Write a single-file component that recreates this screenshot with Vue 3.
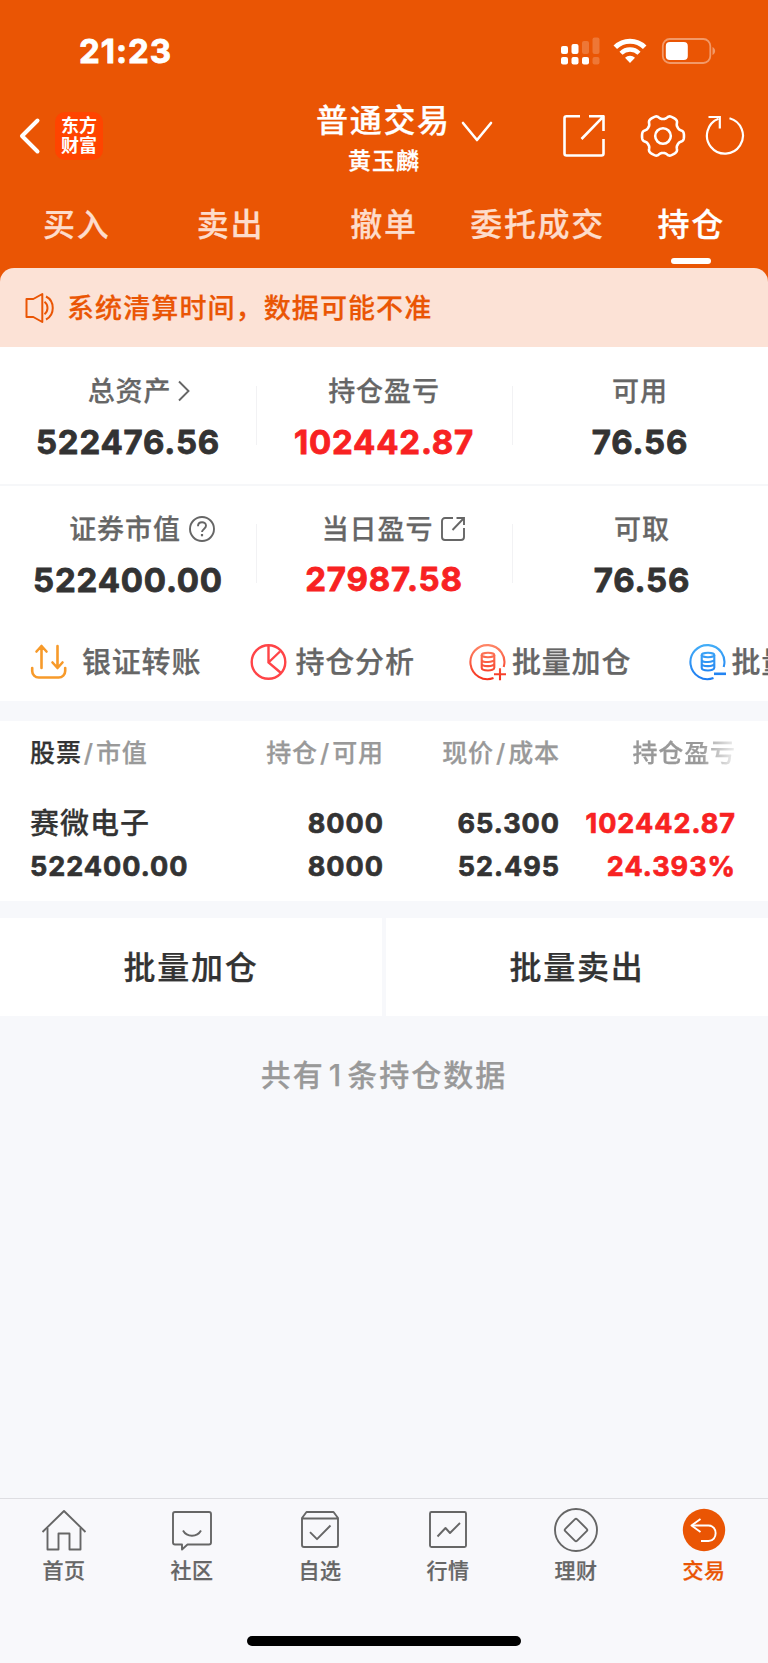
<template>
  <div class="page">
    <header class="header">
      <div class="status">
        <span class="time">21:23</span>
        <div class="status-icons">
          <svg class="signal" width="40" height="28" viewBox="0 0 40 28" fill="#fff">
            <rect x="1" y="9" width="7" height="8" rx="2" />
            <rect x="11.5" y="7" width="7" height="10" rx="2" />
            <rect x="22" y="4" width="7" height="13" rx="2" opacity=".2" />
            <rect x="32.5" y="0.5" width="7" height="16.5" rx="2" opacity=".2" />
            <rect x="1" y="20" width="7" height="7.5" rx="2" />
            <rect x="11.5" y="20" width="7" height="7.5" rx="2" />
            <rect x="22" y="20" width="7" height="7.5" rx="2" />
            <rect x="32.5" y="20" width="7" height="7.5" rx="2" opacity=".2" />
          </svg>
          <svg class="wifi" width="34" height="26" viewBox="0 0 34 26" fill="none" stroke="#fff" stroke-width="5">
            <path d="M2.3 9.3a20.8 20.8 0 0 1 29.4 0" />
            <path d="M8 15.2a12.8 12.8 0 0 1 18 0" stroke-width="4.4" />
            <path d="M17 25l-5-5.2a7.2 7.2 0 0 1 10 0z" fill="#fff" stroke="none" />
          </svg>
          <svg class="battery" width="56" height="28" viewBox="0 0 56 28" fill="none">
            <rect x="1.8" y="2" width="47.5" height="24" rx="7" stroke="#fff" stroke-opacity=".4" stroke-width="1.8" />
            <rect x="4.8" y="5" width="22" height="18" rx="4" fill="#fff" />
            <path d="M51.5 10c3.5 1.5 3.5 6.5 0 8z" fill="#fff" fill-opacity=".4" />
          </svg>
        </div>
      </div>

      <div class="nav">
        <div class="nav-left">
          <svg width="22" height="38" viewBox="0 0 22 38" fill="none" stroke="#fff" stroke-width="4" stroke-linecap="round" stroke-linejoin="round">
            <path d="M18.5 3.5L3 19l15.5 15.5" />
          </svg>
          <div class="logo"><span>东方</span><span>财富</span></div>
        </div>
        <div class="nav-title">
          <div class="title">普通交易</div>
          <div class="user">黄玉麟</div>
        </div>
        <svg class="arrow" width="32" height="22" viewBox="0 0 32 22" fill="none" stroke="#fff" stroke-width="2.6" stroke-linecap="round" stroke-linejoin="round">
          <path d="M2 2l14 17L30 2" />
        </svg>
        <div class="nav-right">
          <svg width="44" height="44" viewBox="0 0 44 44" fill="none" stroke="#fff" stroke-width="2.6" stroke-linejoin="round">
            <path d="M18 2.3H4.5a2 2 0 0 0-2 2V39.5a2 2 0 0 0 2 2h35a2 2 0 0 0 2-2V25M27 2.3h14.5V17M41.5 2.3L19.5 25" />
          </svg>
          <svg class="gear" width="46" height="46" viewBox="-23 -23 46 46" fill="none" stroke="#fff" stroke-width="2.6" stroke-linejoin="round">
            <path :d="gear" />
            <circle r="7.8" />
          </svg>
          <svg class="refresh" width="42" height="44" viewBox="0 0 42 44" fill="none" stroke="#fff" stroke-width="2.2">
            <path d="M25.5 4.2A18 18 0 1 1 14.5 4.8" />
            <path d="M4.5 3H15.8V14.5" />
          </svg>
        </div>
      </div>

      <nav class="tabs">
        <div v-for="tab in tabs" :key="tab" class="tab" :class="{ active: tab === activeTab }">{{ tab }}</div>
      </nav>
    </header>

    <div class="notice-wrap">
      <div class="notice">
        <svg width="30" height="32" viewBox="0 0 30 32" fill="none" stroke="#ea5504" stroke-width="2" stroke-linejoin="round">
          <path d="M1.5 7h6.8l9-5v28l-9-5H1.5z" />
          <path d="M19.5 9.8c4 3 4 9.4 0 12.4" />
          <path d="M21 4.5c9 4.5 9 18.5 0 23" />
        </svg>
        <span>系统清算时间，数据可能不准</span>
      </div>
    </div>

    <section class="assets">
      <div v-for="(row, i) in assets" :key="i" class="asset-row">
        <div v-for="item in row" :key="item.label" class="asset">
          <div class="asset-label" :class="item.icon">
            <span>{{ item.label }}</span>
            <svg v-if="item.icon === 'right'" class="ic-right" width="14" height="22" viewBox="0 0 14 22" fill="none" stroke="#666" stroke-width="1.9">
              <path d="M2 1.5l9.5 9.5L2 20.5" />
            </svg>
            <svg v-if="item.icon === 'help'" class="ic-help" width="26" height="26" viewBox="0 0 26 26" fill="none" stroke="#666" stroke-width="1.9">
              <circle cx="13" cy="13" r="12" />
              <path d="M9 10.2c0-5.2 8-5.2 8-.4 0 3-4 3.2-4 6.2" />
              <path d="M13 18v2.3" stroke-width="2.2" />
            </svg>
            <svg v-if="item.icon === 'share'" class="ic-share" width="26" height="26" viewBox="0 0 26 26" fill="none" stroke="#666" stroke-width="1.9">
              <path d="M13 2H5a3 3 0 0 0-3 3v16a3 3 0 0 0 3 3h16a3 3 0 0 0 3-3v-9M16.5 2H24v7M24 2L12.5 14" />
            </svg>
          </div>
          <div class="asset-value" :class="{ red: item.red }">{{ item.value }}</div>
        </div>
      </div>
    </section>

    <section class="tools">
      <div class="tool first">
        <svg width="38" height="38" viewBox="0 0 38 38" fill="none" stroke="#f79a2a" stroke-width="2.6" stroke-linecap="round" stroke-linejoin="round">
          <path d="M2.2 25v3a6.5 6.5 0 0 0 6.5 6.5h20A6.5 6.5 0 0 0 35.2 28v-3" />
          <path d="M11.5 25V3M6.500 8.500l5-5.500 5 5.500M27.500 3v21.500M22.500 19.500l5 5.500 5-5.500" />
        </svg>
        <span>银证转账</span>
      </div>
      <div class="tool">
        <svg width="38" height="38" viewBox="0 0 38 38" fill="none" stroke="#ff4447" stroke-width="2.4">
          <circle cx="18.5" cy="19" r="16.8" />
          <path d="M18.5 2v17.500L31 30M18.500 19.500L30 8.500" />
        </svg>
        <span>持仓分析</span>
      </div>
      <div v-for="op in batchTools" :key="op.label" class="tool batch-tool">
        <svg width="38" height="38" viewBox="0 0 38 38" fill="none" :stroke="`url(#${op.id})`" stroke-width="2.1">
          <defs>
            <linearGradient :id="op.id" gradientUnits="userSpaceOnUse" x1="0" y1="0" x2="0" y2="38">
              <stop offset="0" :stop-color="op.from" />
              <stop offset="1" :stop-color="op.to" />
            </linearGradient>
          </defs>
          <path d="M34.7 24A17 17 0 1 0 24.5 35" />
          <ellipse cx="19" cy="12" rx="6.3" ry="2.2" />
          <path d="M12.7 12v12.800c0 3.600 12.600 3.600 12.600 0V12M12.700 16.400c0 3.400 12.600 3.400 12.600 0M12.700 20.600c0 3.400 12.600 3.400 12.600 0" />
          <path v-if="op.plus" d="M25 31.2h12M31 25.2v12" />
          <path v-else d="M25 30.8h12" stroke-width="2.6" />
        </svg>
        <span>{{ op.label }}</span>
      </div>
    </section>

    <section class="positions">
      <div class="grid head">
        <div><b>股票</b><i>/</i>市值</div>
        <div>持仓<i>/</i>可用</div>
        <div>现价<i>/</i>成本</div>
        <div class="fade">持仓盈亏</div>
      </div>
      <div class="grid line line-name">
        <div class="name">赛微电子</div>
        <div>8000</div>
        <div>65.300</div>
        <div class="red">102442.87</div>
      </div>
      <div class="grid line">
        <div>522400.00</div>
        <div>8000</div>
        <div>52.495</div>
        <div class="red">24.393%</div>
      </div>
    </section>

    <div class="batch">
      <div class="batch-btn">批量加仓</div>
      <div class="batch-btn">批量卖出</div>
    </div>

    <p class="total">共有<em>1</em>条持仓数据</p>

    <footer class="footer">
      <div class="menu">
        <div v-for="item in menu" :key="item.label" class="menu-item" :class="{ active: item.active }">
          <svg width="46" height="46" viewBox="0 0 46 46" fill="none" stroke-width="1.9" stroke-linejoin="round">
            <circle v-if="item.active" cx="23" cy="23" r="21.2" fill="#ea5504" />
            <path v-for="d in item.paths" :key="d" :d="d" :stroke="item.active ? '#fff' : '#666'" />
            <circle v-if="item.round" cx="23" cy="23" r="21" stroke="#666" />
          </svg>
          <span>{{ item.label }}</span>
        </div>
      </div>
      <div class="home-bar"></div>
    </footer>
  </div>
</template>

<script setup>

  import { ref } from 'vue';

  const tabs = ['买入', '卖出', '撤单', '委托成交', '持仓'];
  const activeTab = ref('持仓');

  const assets = [
    [
      { label: '总资产', value: '522476.56', icon: 'right' },
      { label: '持仓盈亏', value: '102442.87', red: true },
      { label: '可用', value: '76.56' }
    ],
    [
      { label: '证券市值', value: '522400.00', icon: 'help' },
      { label: '当日盈亏', value: '27987.58', icon: 'share', red: true },
      { label: '可取', value: '76.56' }
    ]
  ];

  const batchTools = [
    { id: 'batch-add', label: '批量加仓', from: '#ff8a6a', to: '#f5301c', plus: true },
    { id: 'batch-sell', label: '批量卖出', from: '#45b0f8', to: '#1c7af0', plus: false }
  ];

  const menu = [
    {
      label: '首页',
      paths: ['M1.5 25L23 4l21.5 21', 'M6.5 21v21.5h11v-16h11v16h11V21']
    },
    {
      label: '社区',
      paths: [
        'M6 5h34a2 2 0 0 1 2 2v28.5a2 2 0 0 1-2 2H18.5L13 42.5v-5H6a2 2 0 0 1-2-2V7a2 2 0 0 1 2-2z',
        'M14 23.5c4 7 14 7 18 0'
      ]
    },
    {
      label: '自选',
      paths: [
        'M9.5 5h27l4.5 6v27a2 2 0 0 1-2 2H7a2 2 0 0 1-2-2V11zM5 11.5h36',
        'M13 25.2l7 7L33.5 18.5'
      ]
    },
    {
      label: '行情',
      paths: [
        'M6.5 5h33a1.5 1.5 0 0 1 1.5 1.5v32a1.5 1.5 0 0 1-1.5 1.5h-33A1.5 1.5 0 0 1 5 38.5v-32A1.5 1.5 0 0 1 6.5 5z',
        'M12.5 29.5l8-8.5 4.5 5 10-10'
      ]
    },
    {
      label: '理财',
      round: true,
      paths: ['M21.8 12.3a1.7 1.7 0 0 1 2.4 0l9.5 9.5a1.7 1.7 0 0 1 0 2.4l-9.5 9.5a1.7 1.7 0 0 1-2.4 0l-9.5-9.5a1.7 1.7 0 0 1 0-2.4z']
    },
    {
      label: '交易',
      active: true,
      paths: ['M19.5 12L10.5 18.5l9 6.5', 'M11 18.5h16.500c9.500 0 9.500 15.500 0 15.500H20']
    }
  ];

  // Шестерёнка: плавная волна вокруг окружности
  const gearPath = () => {
    const points = [];
    for (let deg = 0; deg < 360; deg += 3) {
      const a = deg * Math.PI / 180;
      const r = 18.9 + 2.1 * Math.tanh(Math.cos(a * 6) * 2 + 0.5);
      points.push(`${(r * Math.cos(a)).toFixed(2)} ${(r * Math.sin(a)).toFixed(2)}`);
    }
    return `M${points.join('L')}Z`;
  };
  const gear = gearPath();

</script>

<style>

body {
  margin: 0;
  background: #f7f8fb;
}

</style>

<style scoped>

.page {
  display: flex;
  flex-direction: column;
  width: 768px;
  height: 1663px;
  overflow: hidden;
  background: #f7f8fb;
  color: #333;
  font-family: Inter, "Noto Sans CJK SC", sans-serif;
  font-weight: 500;
  -webkit-text-stroke: 0.25px currentColor;
}

svg {
  display: block;
  flex: none;
}

.header {
  height: 268px;
  background: #ea5504;
  color: #fff;
}

.status {
  display: flex;
  justify-content: space-between;
  height: 102px;
  padding: 0 51px 0 79px;
  align-items: center;
  box-sizing: border-box;
}

.time {
  font-size: 33px;
  font-weight: 700;
  line-height: 40px;
  letter-spacing: 1px;
  -webkit-text-stroke-width: 0.8px;
}

.status-icons {
  display: flex;
  align-items: center;
}

.wifi {
  margin-left: 13px;
}

.battery {
  margin-left: 14px;
}

.nav {
  display: grid;
  grid-template-columns: 316px 136px 1fr auto;
  height: 84px;
}

.nav-left {
  display: flex;
  align-items: center;
  height: 68px;
  padding-left: 19px;
  gap: 14px;
}

.logo {
  display: flex;
  flex-direction: column;
  justify-content: center;
  align-items: center;
  width: 48px;
  height: 48px;
  border-radius: 10px;
  background: #ff4400;
  font-size: 18px;
  font-weight: 700;
  line-height: 20px;
  -webkit-text-stroke-width: 0;
}

.title {
  padding-top: 1px;
  font-size: 32px;
  line-height: 36px;
  letter-spacing: 1.7px;
  white-space: nowrap;
}

.user {
  margin-top: 7px;
  font-size: 23px;
  line-height: 30px;
  letter-spacing: 1px;
  text-align: center;
}

.arrow {
  margin: 19px 0 0 9px;
}

.nav-right {
  display: flex;
  align-items: center;
  height: 68px;
  padding-right: 22px;
}

.gear {
  margin-left: 34px;
}

.refresh {
  margin-left: 18px;
}

.tabs {
  display: grid;
  grid-template-columns: repeat(5, 1fr);
}

.tab {
  display: flex;
  flex-direction: column;
  align-items: center;
  padding-top: 17px;
  color: #fddccb;
  font-size: 32px;
  line-height: 44px;
  letter-spacing: 1.7px;
  white-space: nowrap;
}

.tab.active {
  color: #fff;
}

.tab.active::after {
  content: "";
  width: 40px;
  height: 6px;
  margin-top: 11px;
  border-radius: 3px;
  background: #fff;
}

.notice-wrap {
  background: #ea5504;
}

.notice {
  display: flex;
  align-items: center;
  height: 79px;
  padding-left: 25px;
  gap: 12px;
  border-radius: 14px 14px 0 0;
  background: #fce2d6;
  color: #ea5504;
  font-size: 27px;
  letter-spacing: 1.1px;
}

.notice span {
  padding-bottom: 3px;
}

.assets {
  background: #fff;
}

.asset-row {
  display: grid;
  grid-template-columns: repeat(3, 1fr);
  height: 137px;
}

.asset-row + .asset-row {
  border-top: 2px solid #f6f7f9;
}

.asset {
  display: flex;
  flex-direction: column;
  align-items: center;
  padding-top: 22px;
}

.asset + .asset {
  background: linear-gradient(#f2f2f4, #f2f2f4) no-repeat left 39px / 1px 59px;
}

.asset-row + .asset-row .asset {
  padding-top: 21px;
  background-position-y: 38px;
}

.asset-row + .asset-row .asset:last-child {
  padding-left: 4px;
}

.asset-label {
  display: flex;
  align-items: center;
  height: 40px;
  color: #666;
  font-size: 27px;
  letter-spacing: 0.9px;
}

.asset-label svg {
  margin-top: 3px;
}

.asset-label.right {
  padding-left: 23px;
}

.asset-label.help {
  padding-left: 28px;
}

.asset-label.share {
  padding-left: 20px;
}

.ic-right {
  margin-left: 6px;
}

.ic-help {
  margin-left: 8px;
}

.ic-share {
  margin-left: 7px;
}

.asset-value {
  margin-top: 13px;
  font-size: 33px;
  font-weight: 700;
  line-height: 40px;
  letter-spacing: 0.8px;
  -webkit-text-stroke-width: 0.8px;
}

.asset-row + .asset-row .asset-value.red {
  margin-top: 12px;
}

.red {
  color: #f82222;
}

.tools {
  display: flex;
  height: 78px;
  padding-left: 30px;
  overflow: hidden;
  background: #fff;
  color: #666;
  font-size: 29px;
  letter-spacing: 0.8px;
}

.tool {
  display: flex;
  flex: none;
  align-items: center;
  width: 219.5px;
  height: 77px;
  gap: 8px;
  white-space: nowrap;
}

.tool span {
  padding-bottom: 3px;
}

.tool.first {
  gap: 14px;
}

.tool.batch-tool {
  gap: 5px;
}

.positions {
  height: 180px;
  margin-top: 20px;
  background: #fff;
}

.grid {
  display: grid;
  grid-template-columns: 170px 184px 176px 176px;
  padding-left: 30px;
  text-align: right;
}

.grid > div:first-child {
  text-align: left;
}

.head {
  height: 62px;
  color: #999;
  font-size: 25px;
  line-height: 64px;
  letter-spacing: 0.9px;
}

.head b {
  color: #333;
  font-weight: 500;
}

.head i {
  padding: 0 2px;
  font-style: normal;
}

.fade {
  -webkit-mask-image: linear-gradient(to right, #000 140px, transparent 182px);
  mask-image: linear-gradient(to right, #000 140px, transparent 182px);
}

.line {
  font-size: 27px;
  font-weight: 700;
  line-height: 43px;
  letter-spacing: 1px;
  -webkit-text-stroke-width: 0.7px;
}

.line-name {
  padding-top: 19px;
}

.name {
  font-size: 29px;
  font-weight: 500;
  -webkit-text-stroke-width: 0.25px;
}

.batch {
  display: grid;
  grid-template-columns: 1fr 1fr;
  gap: 4px;
  margin-top: 17px;
}

.batch-btn {
  height: 98px;
  background: #fff;
  font-size: 32px;
  line-height: 100px;
  letter-spacing: 1.8px;
  text-align: center;
}

.total {
  margin: 37px 0 0;
  color: #999;
  font-size: 30px;
  line-height: 44px;
  letter-spacing: 2px;
  text-align: center;
}

.total em {
  padding: 0 4px;
  font-style: normal;
}

.footer {
  height: 165px;
  margin-top: auto;
  box-sizing: border-box;
  border-top: 1px solid #dedee2;
  background: #f8f8fb;
}

.menu {
  display: grid;
  grid-template-columns: repeat(6, 1fr);
  height: 137px;
}

.menu-item {
  display: flex;
  flex-direction: column;
  align-items: center;
  padding-top: 8px;
  color: #666;
  font-size: 21px;
  line-height: 30px;
  letter-spacing: 0.6px;
}

.menu-item span {
  margin-top: 3px;
}

.menu-item.active {
  color: #ea5504;
}

.home-bar {
  width: 274px;
  height: 10px;
  margin: 0 auto;
  border-radius: 5px;
  background: #000;
}

</style>
